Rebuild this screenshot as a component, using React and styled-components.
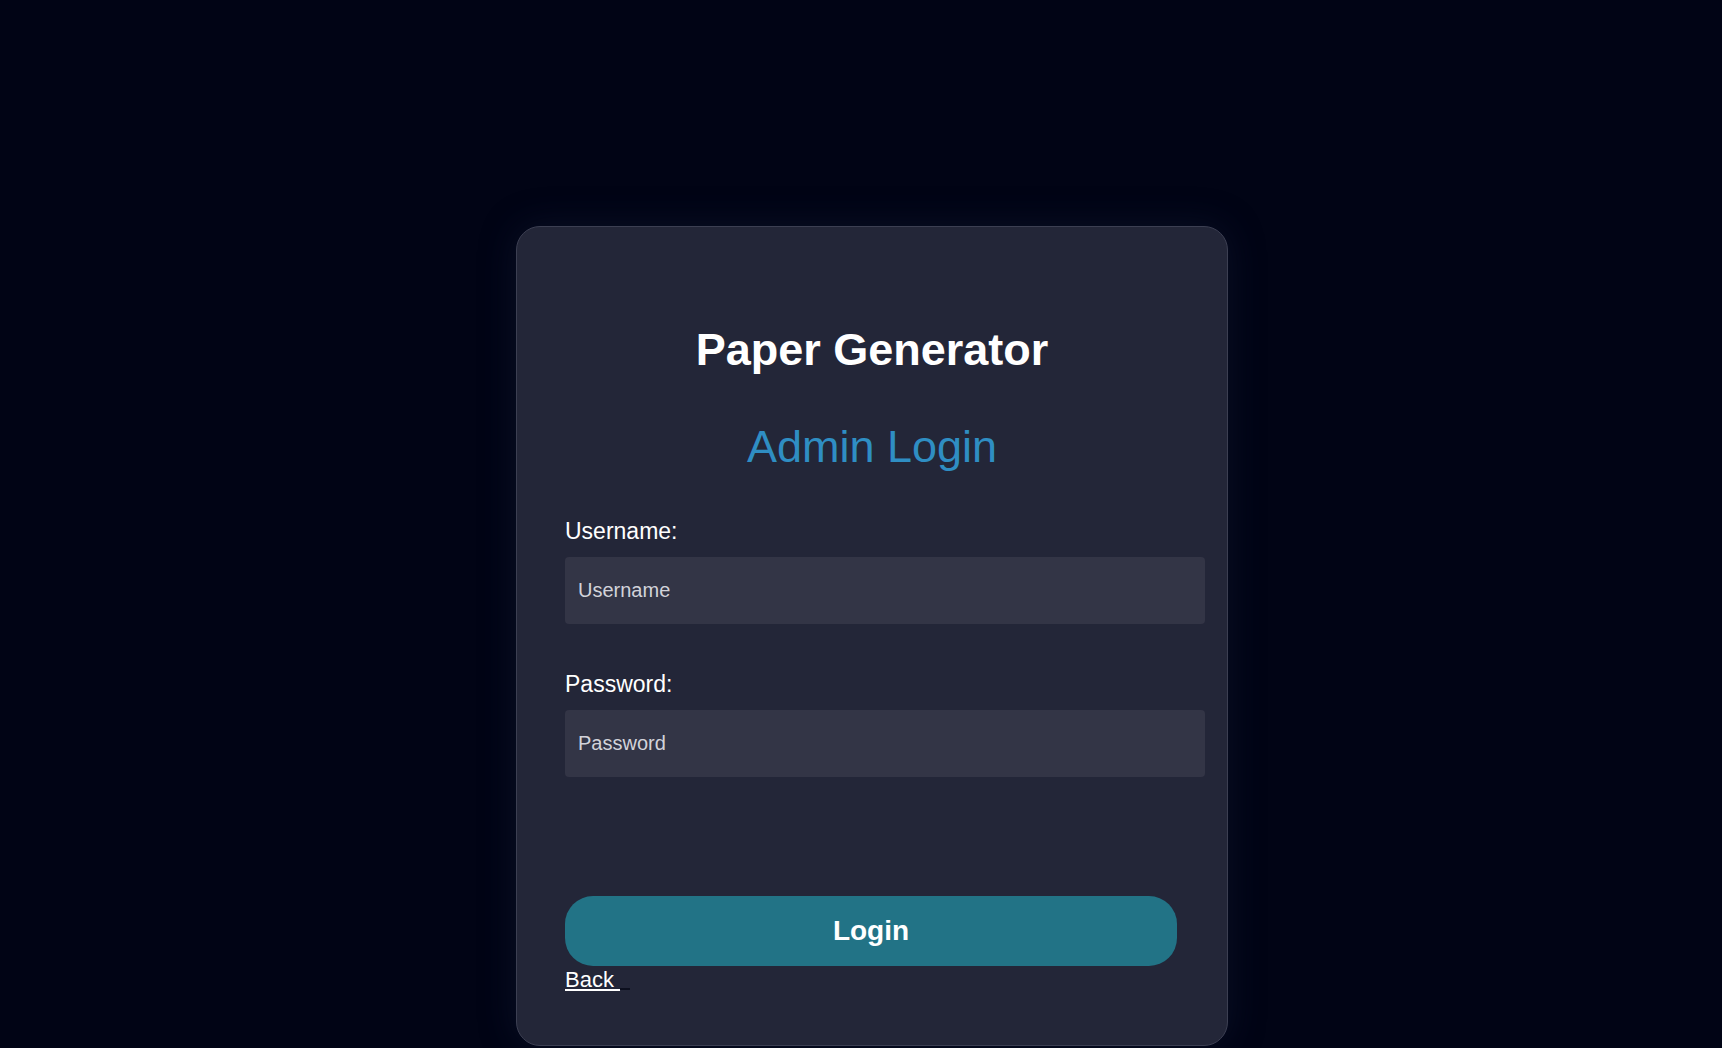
import React from 'react'
import styled, { createGlobalStyle } from 'styled-components'

const GlobalStyle = createGlobalStyle`
  html, body {
    margin: 0;
    padding: 0;
    background: #010415;
    font-family: "Liberation Sans", Arial, sans-serif;
  }
`

const Page = styled.div`
  min-height: 100vh;
  display: flex;
  justify-content: center;
  align-items: flex-start;
  padding: 226px 0 0 22px;
  box-sizing: border-box;
  background: #010415;
`

const Card = styled.div`
  width: 712px;
  box-sizing: border-box;
  padding: 97px 48px 53px;
  background: #232638;
  border: 1px solid #3c3f52;
  border-radius: 24px;
  box-shadow: 0 0 36px rgba(30, 36, 70, 0.35);
`

const Title = styled.h1`
  margin: 0;
  font-size: 45px;
  line-height: 52px;
  font-weight: 700;
  color: #ffffff;
  text-align: center;
`

const Subtitle = styled.h2`
  margin: 45px 0 0;
  font-size: 45px;
  line-height: 52px;
  font-weight: 400;
  color: #2f8ec3;
  text-align: center;
`

const Form = styled.form`
  display: flex;
  flex-direction: column;
  margin-top: 46px;
`

const Label = styled.label`
  display: block;
  margin-top: ${p => (p.$first ? '0' : '48px')};
  font-size: 23px;
  line-height: 25px;
  color: #ffffff;
`

const Input = styled.input`
  display: block;
  width: 100%;
  height: 67px;
  box-sizing: content-box;
  margin: 13px 0 0;
  padding: 0 13px;
  border: none;
  border-radius: 4px;
  background: #333546;
  color: #ffffff;
  font-family: "Liberation Sans", Arial, sans-serif;
  font-size: 20px;
  outline: none;
  &::placeholder {
    color: #d2d3da;
  }
`

const Button = styled.button`
  margin-top: 119px;
  width: 612px;
  height: 70px;
  border: none;
  border-radius: 28px;
  background: #227386;
  color: #ffffff;
  font-family: "Liberation Sans", Arial, sans-serif;
  font-size: 28px;
  font-weight: 700;
  cursor: pointer;
`

const BackRow = styled.div`
  margin-top: 1px;
  font-size: 22px;
  line-height: 25px;
`

const BackLink = styled.a`
  color: #ffffff;
  text-decoration: underline;
  cursor: pointer;
`

const Tail = styled.span`
  display: inline-block;
  width: 10px;
  height: 2px;
  background: #0c0f1e;
  vertical-align: -3px;
`

export default function App() {
  return (
    <>
      <GlobalStyle />
      <Page>
        <Card>
          <Title>Paper Generator</Title>
          <Subtitle>Admin Login</Subtitle>
          <Form onSubmit={e => e.preventDefault()}>
            <Label $first htmlFor="username">Username:</Label>
            <Input id="username" type="text" placeholder="Username" />
            <Label htmlFor="password">Password:</Label>
            <Input id="password" type="password" placeholder="Password" />
            <Button type="submit">Login</Button>
            <BackRow>
              <BackLink>Back&nbsp;</BackLink>
              <Tail />
            </BackRow>
          </Form>
        </Card>
      </Page>
    </>
  )
}
